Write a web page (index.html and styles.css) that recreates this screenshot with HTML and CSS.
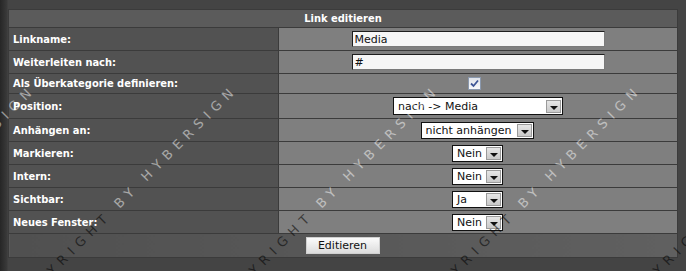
FILE: index.html
```html
<html>
  <head>
    <title>Link editieren</title>
    <link rel="stylesheet" href="styles.css">
  </head>
  <body>
    <div class="page">
      <!-- Formular -->
      <table class="edit">
        <tr class="head">
          <th colspan="2">Link editieren</th>
        </tr>
        <tr>
          <td class="label">Linkname:</td>
          <td class="field"><input class="text" type="text" value="Media"></td>
        </tr>
        <tr>
          <td class="label">Weiterleiten nach:</td>
          <td class="field"><input class="text" type="text" value="#"></td>
        </tr>
        <tr class="check-row">
          <td class="label">Als Überkategorie definieren:</td>
          <td class="field">
            <span class="check">
              <svg width="9" height="9" viewBox="0 0 9 9"><path d="M1 4.5 L3.5 7 L8 1.5" fill="none" stroke="#3d5596" stroke-width="1.8"/></svg>
            </span>
          </td>
        </tr>
        <tr class="tall-row">
          <td class="label">Position:</td>
          <td class="field">
            <span class="select pos"><span class="value">nach -&gt; Media</span><span class="arrow"></span></span>
          </td>
        </tr>
        <tr>
          <td class="label">Anhängen an:</td>
          <td class="field">
            <span class="select attach"><span class="value">nicht anhängen</span><span class="arrow"></span></span>
          </td>
        </tr>
        <tr>
          <td class="label">Markieren:</td>
          <td class="field">
            <span class="select small"><span class="value">Nein</span><span class="arrow"></span></span>
          </td>
        </tr>
        <tr>
          <td class="label">Intern:</td>
          <td class="field">
            <span class="select small"><span class="value">Nein</span><span class="arrow"></span></span>
          </td>
        </tr>
        <tr>
          <td class="label">Sichtbar:</td>
          <td class="field">
            <span class="select small"><span class="value">Ja</span><span class="arrow"></span></span>
          </td>
        </tr>
        <tr>
          <td class="label">Neues Fenster:</td>
          <td class="field">
            <span class="select small"><span class="value">Nein</span><span class="arrow"></span></span>
          </td>
        </tr>
        <tr class="foot">
          <td colspan="2"><button class="submit">Editieren</button></td>
        </tr>
      </table>

      <!-- Wasserzeichen -->
      <div class="watermark">
        <span class="mark m1"><b>COPYRIGHT</b> BY HYBERSIGN</span>
        <span class="mark m2"><b>COPYRIGHT</b> BY HYBERSIGN</span>
        <span class="mark m3"><b>COPYRIGHT</b> BY HYBERSIGN</span>
        <span class="mark m4"><b>COPYRIGHT</b> BY HYBERSIGN</span>
        <span class="mark m5"><b>COPYRIGHT</b> BY HYBERSIGN</span>
      </div>
    </div>
  </body>
</html>
```

FILE: styles.css
```css
/* Grundlayout */
body {
  margin: 0;
  background-color: #444444;
  font-family: "DejaVu Sans", Verdana, sans-serif;
  font-size: 11px;
  overflow: hidden;
}

.page {
  position: relative;
  height: 271px;
  padding: 9px 8px 0 8px;
  box-sizing: border-box;
  overflow: hidden;
  background: linear-gradient(to right, #262626 0, #3a3a3a 7px, #444444 8px);
}

/* Tabelle */
.edit {
  width: 670px;
  border-collapse: collapse;
  border: 1px solid #363636;
  font-family: "DejaVu Sans", Verdana, sans-serif;
  font-size: 11px;
}

.edit th,
.edit td {
  border: 1px solid #3b3b3b;
  padding: 0;
}

.edit tr {
  height: 23px;
}

.edit .head {
  height: 18px;
}

.edit .check-row {
  height: 20px;
}

.edit .tall-row {
  height: 25px;
}

.head th {
  background-color: #5b5b5b;
  color: #ffffff;
  font-family: "DejaVu Sans Condensed", "DejaVu Sans", sans-serif;
  font-size: 11px;
  font-weight: bold;
  text-align: center;
}

.label {
  width: 265px;
  padding-left: 4px !important;
  background-color: #525252;
  color: #ffffff;
  font-family: "DejaVu Sans Condensed", "DejaVu Sans", sans-serif;
  font-size: 11px;
  font-weight: bold;
}

.field {
  background-color: #7f7f7f;
  text-align: center;
}

/* Textfelder */
.text {
  display: block;
  margin: 0 auto;
  width: 253px;
  height: 16px;
  padding: 0 2px;
  box-sizing: border-box;
  border: 1px solid #7a7a7a;
  border-top-color: #1e1e1e;
  border-left-color: #1e1e1e;
  background-color: #f6f6f6;
  color: #111111;
  font-family: "DejaVu Sans", sans-serif;
  font-size: 11px;
}

/* Checkbox */
.check {
  display: inline-flex;
  align-items: center;
  justify-content: center;
  width: 11px;
  height: 11px;
  margin-left: -8px;
  border: 1px solid #8a98ad;
  background: linear-gradient(#dfe3ea, #f7f8fa);
  vertical-align: middle;
}

/* Auswahlfelder */
.select {
  display: inline-flex;
  align-items: center;
  justify-content: space-between;
  box-sizing: border-box;
  height: 17px;
  border: 1px solid #111111;
  background-color: #ffffff;
  color: #111111;
  font-size: 11px;
  text-align: left;
  vertical-align: middle;
}

.select .value {
  padding-left: 4px;
  white-space: nowrap;
}

.select .arrow {
  position: relative;
  width: 15px;
  height: 13px;
  margin-right: 1px;
  border: 1px solid #9a9a9a;
  box-sizing: border-box;
  background: linear-gradient(#e6e6e6, #c9c9c9);
}

.select .arrow::after {
  content: "";
  position: absolute;
  left: 3px;
  top: 5px;
  border-left: 4px solid transparent;
  border-right: 4px solid transparent;
  border-top: 4px solid #111111;
}

.select.pos {
  width: 170px;
  height: 18px;
}

.select.attach {
  width: 113px;
  margin-left: -2px;
}

.select.small {
  width: 51px;
  margin-left: -1px;
}

/* Fußzeile */
.foot td {
  height: 24px;
  background: linear-gradient(to right, #505050, #606060);
  text-align: center;
}

.submit {
  width: 74px;
  height: 17px;
  margin-left: -1px;
  padding: 0;
  border: 1px solid #d0d0d0;
  background: linear-gradient(#fbfbfb, #dcdcdc);
  color: #111111;
  font-family: "DejaVu Sans", sans-serif;
  font-size: 11px;
}

/* Wasserzeichen */
.watermark {
  position: absolute;
  left: 0;
  top: 0;
  width: 686px;
  height: 271px;
  overflow: hidden;
  pointer-events: none;
}

.mark {
  position: absolute;
  top: 300px;
  transform-origin: 0 0;
  transform: rotate(-45deg);
  font-family: "DejaVu Sans", sans-serif;
  font-size: 13px;
  line-height: 13px;
  letter-spacing: 6px;
  white-space: nowrap;
  color: rgba(255, 255, 255, 0.5);
}

.mark b {
  font-weight: normal;
  color: rgba(0, 0, 0, 0.55);
}

.m1 { left: -189px; }
.m2 { left: 13px; }
.m3 { left: 215px; }
.m4 { left: 417px; }
.m5 { left: 619px; }
```
